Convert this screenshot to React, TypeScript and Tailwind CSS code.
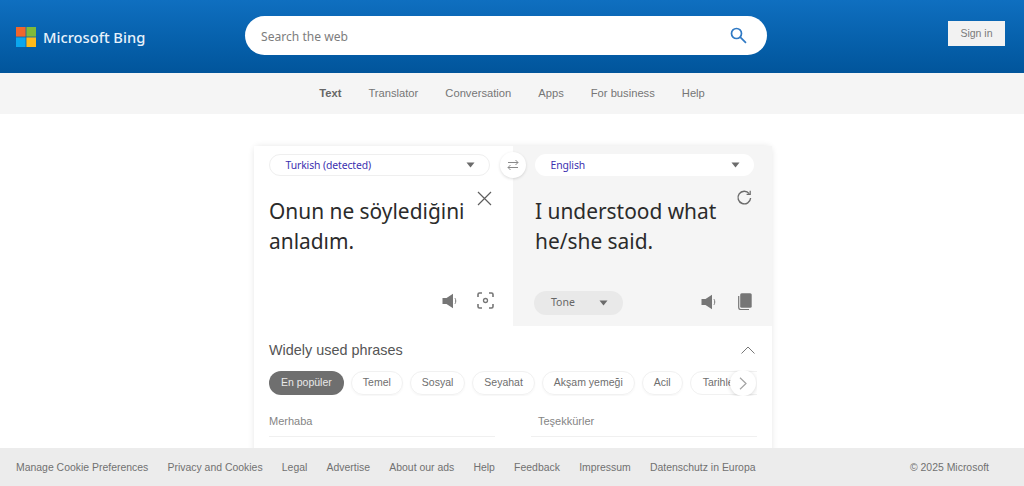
import React from "react";

const arial = "font-['Liberation_Sans',Arial,sans-serif]";
const segoe = "font-['Noto_Sans',sans-serif]";

function Logo() {
  return (
    <svg width="20" height="20" viewBox="0 0 20 20" className="shrink-0">
      <rect x="0" y="0" width="9.6" height="9.6" fill="#f0662c" />
      <rect x="10.4" y="0" width="9.6" height="9.6" fill="#7fba3a" />
      <rect x="0" y="10.4" width="9.6" height="9.6" fill="#0ba6ee" />
      <rect x="10.4" y="10.4" width="9.6" height="9.6" fill="#ffba1a" />
    </svg>
  );
}

function Caret() {
  return (
    <svg width="9" height="6" viewBox="0 0 9 6">
      <path d="M0.5 0.5H8.5L4.5 5.5Z" fill="#6b6b6b" />
    </svg>
  );
}

function Speaker() {
  return (
    <svg width="17" height="16" viewBox="0 0 17 16">
      <path d="M0.5 5H4.5L11 0.8V15.2L4.5 11H0.5Z" fill="#767676" />
      <path d="M13 5.2C14 6.8 14 9.2 13 10.8" fill="none" stroke="#767676" strokeWidth="1" />
    </svg>
  );
}

function Capture() {
  return (
    <svg width="17" height="17" viewBox="0 0 17 17" fill="none" stroke="#767676" strokeWidth="1.6">
      <path d="M1 5V2.5A1.5 1.5 0 0 1 2.5 1H5M12 1H14.5A1.5 1.5 0 0 1 16 2.5V5M16 12V14.5A1.5 1.5 0 0 1 14.5 16H12M5 16H2.5A1.5 1.5 0 0 1 1 14.5V12" />
      <circle cx="8.5" cy="8.5" r="2" strokeWidth="1.3" />
    </svg>
  );
}

function Copy() {
  return (
    <svg width="14" height="17" viewBox="0 0 14 17">
      <rect x="2.2" y="0.3" width="11.5" height="14.5" rx="1.5" fill="#767676" />
      <path d="M0.7 3V14.5A2 2 0 0 0 2.7 16.5H11" fill="none" stroke="#767676" strokeWidth="1.2" />
    </svg>
  );
}

function LanguageSelect({ label, bordered }: { label: string; bordered?: boolean }) {
  return (
    <div className={`flex h-[22px] shrink-0 items-center justify-between rounded-full bg-white pl-[15.5px] pr-[14px] ${bordered ? "border border-[#efefef]" : ""}`}>
      <span className={`${segoe} pt-[1px] text-[10.4px] tracking-[-0.1px] text-[#3b2fb0]`}>{label}</span>
      <Caret />
    </div>
  );
}

const navItems = ["Translator", "Conversation", "Apps", "For business", "Help"];
const chips = ["Temel", "Sosyal", "Seyahat", "Akşam yemeği", "Acil"];
const footerLinks = [
  "Manage Cookie Preferences",
  "Privacy and Cookies",
  "Legal",
  "Advertise",
  "About our ads",
  "Help",
  "Feedback",
  "Impressum",
  "Datenschutz in Europa",
];

export default function App() {
  return (
    <div className={`${arial} flex h-[486px] w-full flex-col overflow-hidden bg-white`}>
      <header className="flex h-[73px] shrink-0 items-center bg-gradient-to-b from-[#0f6fc0] to-[#01559b] pl-4 pr-[19px]">
        <div className="flex w-[229px] items-center gap-[7px] pt-[2px]">
          <Logo />
          <span className={`${segoe} text-[14.7px] font-medium text-[#e8f2fb]`}>Microsoft Bing</span>
        </div>
        <div className="mb-[2px] flex h-[39px] w-[522px] items-center justify-between rounded-full bg-white pl-4 pr-5">
          <span className={`${segoe} pt-[4px] text-[12.1px] text-[#7d7d7d]`}>Search the web</span>
          <svg width="17" height="17" viewBox="0 0 17 17" fill="none" stroke="#2f79c4" strokeWidth="1.7">
            <circle cx="6.5" cy="6.5" r="5" />
            <path d="M10.2 10.2L16 15.8" />
          </svg>
        </div>
        <div className="mb-[6px] ml-auto flex h-[25px] w-[57px] items-center justify-center bg-[#f2f2f2] text-[10.5px] text-[#7a7a7a]">
          Sign in
        </div>
      </header>

      <nav className="flex h-[41px] shrink-0 items-center justify-center gap-[27px] bg-[#f5f5f5] text-[11.2px] text-[#767676]">
        <span className="font-bold text-[#666666]">Text</span>
        {navItems.map((item) => (
          <span key={item}>{item}</span>
        ))}
      </nav>

      <main className="min-h-0 flex-1 overflow-hidden pl-[254px] pt-8">
        <div className="relative w-[518px] rounded-t-md shadow-[0_0_6px_rgba(0,0,0,0.10)]">
          <div className="flex h-[180px]">
            <section className="flex w-[259px] flex-col bg-white pb-[15px] pl-[15px] pr-[23px] pt-2">
              <LanguageSelect label="Turkish (detected)" bordered />
              <div className="mt-5 flex-1">
                <p className={`${segoe} whitespace-nowrap text-[20.9px] leading-[30px] text-[#2b2b2b]`}>
                  Onun ne söylediğini
                  <br />
                  anladım.
                </p>
              </div>
              <div className="-mr-[4px] mb-[2px] flex items-center justify-end gap-[18px]">
                <Speaker />
                <Capture />
              </div>
            </section>
            <section className="flex w-[259px] flex-col bg-[#f5f5f5] pb-[11px] pl-[22px] pr-[18px] pt-2">
              <LanguageSelect label="English" />
              <div className="mt-5 flex-1">
                <p className={`${segoe} whitespace-nowrap text-[20.9px] leading-[30px] text-[#2b2b2b]`}>
                  I understood what
                  <br />
                  he/she said.
                </p>
              </div>
              <div className="flex items-center justify-between">
                <div className={`${segoe} -ml-px flex h-[24px] w-[89px] items-center justify-between rounded-full bg-[#e9e9e9] pl-[17px] pr-[15px] text-[10.5px] text-[#666666]`}>
                  Tone
                  <Caret />
                </div>
                <div className="mb-[3px] mr-[2px] flex items-center gap-[20px]">
                  <Speaker />
                  <Copy />
                </div>
              </div>
            </section>
          </div>

          <div className="absolute left-[246px] top-[6px] flex h-[26px] w-[26px] items-center justify-center rounded-full bg-white shadow-[0_1px_3px_rgba(0,0,0,0.14)]">
            <svg width="12" height="12" viewBox="0 0 12 12" fill="none" stroke="#8a8a8a" strokeWidth="1">
              <path d="M1 3.5H11M8.5 1L11 3.5L8.5 6M11 8.5H1M3.5 6L1 8.5L3.5 11" />
            </svg>
          </div>
          <svg width="15" height="15" viewBox="0 0 15 15" fill="none" stroke="#5e5e5e" strokeWidth="1.2" className="absolute left-[223px] top-[45px]">
            <path d="M1 1L14 14M14 1L1 14" />
          </svg>
          <svg width="16" height="16" viewBox="0 0 16 16" fill="none" stroke="#6b6b6b" strokeWidth="1.4" className="absolute left-[482px] top-[44px]">
            <path d="M13.2 3.6A6.3 6.3 0 1 0 14.6 8" />
            <path d="M14.2 0.8V4.4H10.6" strokeWidth="1.2" />
          </svg>

          <section className="bg-white px-[15px] pb-10 pt-[15px]">
            <div className="flex items-center justify-between">
              <h2 className="text-[14.4px] leading-[18px] text-[#555555]">Widely used phrases</h2>
              <svg width="14" height="8" viewBox="0 0 14 8" fill="none" stroke="#777777" strokeWidth="1" className="mr-[2px]">
                <path d="M0.5 7.5L7 1L13.5 7.5" />
              </svg>
            </div>
            <div className="relative mt-[11px] flex gap-[7px] overflow-hidden py-px text-[10.5px] text-[#6e6e6e]">
              <span className="flex h-[24px] shrink-0 items-center rounded-full bg-[#6f6f6f] px-[12px] text-[#e9e9e9]">En popüler</span>
              {chips.map((chip) => (
                <span key={chip} className="flex h-[24px] shrink-0 items-center rounded-full border border-[#f1f1f1] px-[11px] shadow-[0_1px_2px_rgba(0,0,0,0.04)]">
                  {chip}
                </span>
              ))}
              <span className="flex h-[24px] shrink-0 items-center rounded-full border border-[#f1f1f1] pl-[12px] pr-8">Tarihler</span>
              <span className="absolute right-[1px] top-0 flex h-[26px] w-[26px] items-center justify-center rounded-full bg-white shadow-[0_1px_4px_rgba(0,0,0,0.16)]">
                <svg width="8" height="13" viewBox="0 0 8 13" fill="none" stroke="#a3a3a3" strokeWidth="1.2">
                  <path d="M1 0.8L7 6.5L1 12.2" />
                </svg>
              </span>
            </div>
            <div className="mt-[17px] grid grid-cols-2 gap-[36px] text-[11px] text-[#858585]">
              <div className="border-b border-[#f0f0f0] pb-[6px]">Merhaba</div>
              <div className="border-b border-[#f0f0f0] pb-[6px] pl-[7px]">Teşekkürler</div>
            </div>
          </section>
        </div>
      </main>

      <footer className="flex h-[38px] shrink-0 items-center justify-between bg-[#ececec] pl-4 pr-[35px] pt-[1px] text-[10.45px] text-[#717171]">
        <div className="flex gap-[19.2px]">
          {footerLinks.map((link) => (
            <span key={link}>{link}</span>
          ))}
        </div>
        <span>© 2025 Microsoft</span>
      </footer>
    </div>
  );
}
